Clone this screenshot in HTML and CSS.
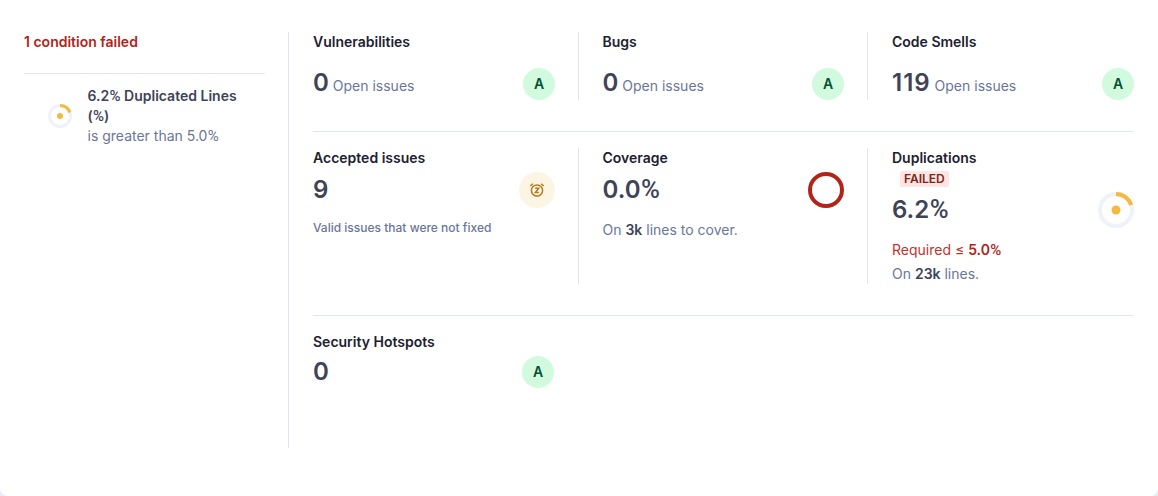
FILE: index.html
```html
<!DOCTYPE html>
<html lang="en">
<head>
<meta charset="utf-8">
<title>Quality gate</title>
<link rel="stylesheet" href="styles.css">
</head>
<body>
<main class="card">
  <aside class="conditions">
    <h2 class="failed-title">1 condition failed</h2>
    <div class="condition">
      <svg class="ring-small" viewBox="0 0 24 24"><circle class="track" cx="12" cy="12" r="10.5"/><path class="arc" d="M12 1.5a10.5 10.5 0 0 1 9.9 7"/><circle class="dot" cx="12" cy="12" r="3"/></svg>
      <div class="condition-text"><strong>6.2<span class="pct">%</span> Duplicated Lines (<span class="pct">%</span>)</strong><div>is greater than 5.0<span class="pct">%</span></div></div>
    </div>
  </aside>
  <section class="measures">
    <div class="row row-issues">
      <article class="cell"><h3>Vulnerabilities</h3><div class="line"><p><b class="value">0</b> Open issues</p><span class="rating">A</span></div></article>
      <article class="cell"><h3>Bugs</h3><div class="line"><p><b class="value">0</b> Open issues</p><span class="rating">A</span></div></article>
      <article class="cell"><h3>Code Smells</h3><div class="line"><p><b class="value value-wide">119</b> Open issues</p><span class="rating">A</span></div></article>
    </div>
    <div class="row row-coverage">
      <article class="cell"><h3>Accepted issues</h3><div class="line"><b class="value">9</b>
        <span class="snooze"><svg viewBox="0 0 16 16" width="16" height="16"><circle cx="8" cy="8.5" r="5.6"/><path d="M1.3 4 3.9 1.7M14.7 4 12.1 1.7M6.2 6.3h3.4L6.4 10.6h3.4"/></svg></span></div>
        <p class="hint">Valid issues that were not fixed</p></article>
      <article class="cell"><h3>Coverage</h3><div class="line"><b class="value">0.0<span class="pct">%</span></b><span class="coverage-ring"></span></div><p class="detail">On <b>3k</b> lines to cover.</p></article>
      <article class="cell cell-failed"><h3>Duplications</h3><div class="badge-line"><span class="badge">FAILED</span></div><div class="line"><b class="value">6.2<span class="pct">%</span></b>
        <svg class="ring" viewBox="0 0 36 36"><circle class="track" cx="18" cy="18" r="16"/><path class="arc" d="M18 2a16 16 0 0 1 15.2 11"/><circle class="dot" cx="18" cy="18" r="4.5"/></svg></div>
        <p class="required">Required ≤ <b>5.0<span class="pct">%</span></b></p><p class="lines">On <b>23k</b> lines.</p></article>
    </div>
    <div class="row row-hotspots">
      <article class="cell"><h3>Security Hotspots</h3><div class="line"><b class="value">0</b><span class="rating">A</span></div></article>
    </div>
  </section>
</main>
</body>
</html>
```
FILE: styles.css
```css
* { box-sizing: border-box; }
body { margin: 0; background: #ebebf5; font: 400 14px/20px Inter, "Noto Sans", sans-serif; color: #6a7699; }
h2, h3, p { margin: 0; }
b, strong { font-weight: 600; color: #3e4357; }
.pct { font-family: Roboto, sans-serif; font-size: 1.07em; font-weight: 500; line-height: 1; margin-left: 0.02em; }
.condition-text div .pct { font-weight: 400; }
.card { display: flex; height: 496px; padding: 32px 24px 48px; background: #fff; border-radius: 0 0 8px 8px; }
.conditions { width: 265px; padding-right: 23px; border-right: 1px solid #dde3f1; }
.failed-title { font-size: 14px; line-height: 20px; font-weight: 600; color: #b42318; padding-bottom: 21px; border-bottom: 1px solid #e1e6f3; }
.condition { display: flex; align-items: center; gap: 15.5px; padding: 12px 24px; }
.condition-text { flex: 1; }
.condition-text strong { display: block; }
svg { fill: none; flex: none; }
.ring-small { width: 24px; height: 24px; }
.ring { width: 36px; height: 36px; }
.track { stroke: #eff2f9; stroke-width: 4; }
.arc { stroke: #f5b840; stroke-width: 4; }
.ring-small .track, .ring-small .arc { stroke-width: 3; }
.dot { fill: #f5b840; }
.conditions, .measures { height: 416px; }
.measures { flex: 1; padding-left: 24px; }
.row { display: grid; grid-template-columns: 266px 289px 1fr; }
.row-issues { height: 100px; padding-bottom: 31px; border-bottom: 1px solid #e1e6f3; }
.row-coverage { height: 184px; padding: 16px 0 31px; border-bottom: 1px solid #e1e6f3; }
.row-hotspots { padding-top: 16px; }
.cell { padding: 0 23px 0 23.5px; }
.cell:first-child { padding-left: 0; }
.cell:nth-child(3) { padding-left: 24px; padding-right: 0; }
.row-hotspots .cell { padding-right: 25px; }
.row-issues .cell:not(:last-child), .row-coverage .cell:not(:last-child) { border-right: 1px solid #e1e6f3; }
h3 { font-size: 14px; line-height: 20px; font-weight: 600; color: #1d212f; }
.line { display: flex; align-items: center; justify-content: space-between; height: 36px; margin-top: 4px; }
.row-issues .line { height: 32px; margin-top: 16px; }
.row-issues p { line-height: 32px; margin-top: 1px; }
.row-hotspots .line { margin-top: 2px; }
.value { font-size: 24px; line-height: 32px; }
.value-wide { letter-spacing: 1px; }
.rating { width: 32px; height: 32px; border-radius: 50%; background: #d1fadf; color: #054f31; font-weight: 600; line-height: 32px; text-align: center; }
.snooze { display: flex; align-items: center; justify-content: center; width: 36px; height: 36px; border-radius: 50%; background: #fcf5e4; }
.snooze svg { stroke: #b87a18; stroke-width: 1.5; }
.coverage-ring { width: 36px; height: 36px; border: 4px solid #b42318; border-radius: 50%; }
.hint { margin-top: 10px; font-size: 12px; font-weight: 500; }
.detail { margin-top: 12px; }
.badge-line { display: flex; height: 20px; padding: 3px 0 0 8px; }
.badge { height: 16px; padding: 0 4px; border-radius: 2px; background: #fee4e2; color: #7a271a; font-size: 12px; line-height: 16px; font-weight: 600; }
.required { margin-top: 12px; color: #c2342a; }
.required b { color: #b42318; }
.lines { margin-top: 4px; }
```
